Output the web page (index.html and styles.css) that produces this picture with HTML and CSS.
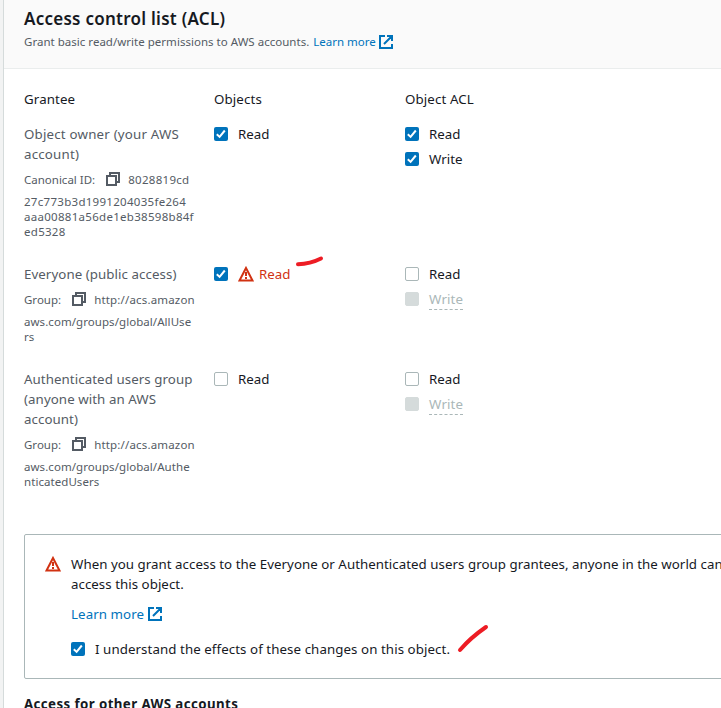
FILE: index.html
```
<!DOCTYPE html>
<html lang="en">
<head>
<meta charset="utf-8">
<title>Access control list (ACL)</title>
<link rel="stylesheet" href="styles.css">
</head>
<body>
<svg class="defs" width="0" height="0" aria-hidden="true">
  <symbol id="external" viewBox="0 0 14 14"><path d="M6 1H1v12h12V9M8 1h5v5M12.5 1.5 5 9" fill="none" stroke="currentColor" stroke-width="2"/></symbol>
  <symbol id="copy" viewBox="0 0 14 14"><path d="M1 4h9v9H1zM4 4V1h9v9h-3" fill="none" stroke="currentColor" stroke-width="2"/></symbol>
  <symbol id="warning" viewBox="0 0 16 16"><path d="M8 2 1.5 14.5h13z" fill="none" stroke="currentColor" stroke-width="2"/><path d="M8 6v4M8 11v2" fill="none" stroke="currentColor" stroke-width="2"/></symbol>
  <symbol id="check" viewBox="0 0 14 14"><path d="m2.8 7.3 2.8 2.6 5.2-6.4" fill="none" stroke="#fff" stroke-width="2"/></symbol>
</svg>
<main class="panel">
  <header class="panel-header">
    <h1>Access control list (ACL)</h1>
    <p class="description"><span class="summary">Grant basic read/write permissions to AWS accounts.</span> <a class="link">Learn more<svg class="icon"><use href="#external"/></svg></a></p>
  </header>
  <section class="grants">
    <div class="row head"><div>Grantee</div><div>Objects</div><div>Object ACL</div></div>
    <div class="row owner">
      <div class="grantee">
        <div class="name">Object owner (your AWS<br>account)</div>
        <div class="ident"><span class="key">Canonical ID:</span><svg class="icon"><use href="#copy"/></svg><span class="hex">8028819cd</span></div>
        <div class="rest hex">27c773b3d1991204035fe264<br>aaa00881a56de1eb38598b84f<br>ed5328</div>
      </div>
      <div class="options"><div class="option"><span class="box on"><svg><use href="#check"/></svg></span><span>Read</span></div></div>
      <div class="options"><div class="option"><span class="box on"><svg><use href="#check"/></svg></span><span>Read</span></div><div class="option"><span class="box on"><svg><use href="#check"/></svg></span><span>Write</span></div></div>
    </div>
    <div class="row everyone">
      <div class="grantee">
        <div class="name">Everyone (public access)</div>
        <div class="ident"><span class="key">Group:</span><svg class="icon"><use href="#copy"/></svg><span class="url">http://acs.amazon</span></div>
        <div class="rest">aws.com/groups/global/AllUse<br>rs</div>
      </div>
      <div class="options"><div class="option danger"><span class="box on"><svg><use href="#check"/></svg></span><svg class="warn"><use href="#warning"/></svg><span>Read</span>
        <svg class="stroke short" viewBox="0 0 30 12"><path d="M3 9.2C11 9 19 7 26 3.5" /></svg></div></div>
      <div class="options"><div class="option"><span class="box"></span><span>Read</span></div><div class="option disabled"><span class="box"></span><span>Write</span></div></div>
    </div>
    <div class="row authenticated">
      <div class="grantee">
        <div class="name">Authenticated users group<br>(anyone with an AWS<br>account)</div>
        <div class="ident"><span class="key">Group:</span><svg class="icon"><use href="#copy"/></svg><span class="url">http://acs.amazon</span></div>
        <div class="rest">aws.com/groups/global/Authe<br>nticatedUsers</div>
      </div>
      <div class="options"><div class="option"><span class="box"></span><span>Read</span></div></div>
      <div class="options"><div class="option"><span class="box"></span><span>Read</span></div><div class="option disabled"><span class="box"></span><span>Write</span></div></div>
    </div>
  </section>
  <section class="alert">
    <svg class="warn"><use href="#warning"/></svg>
    <div class="alert-body">
      <p class="message">When you grant access to the Everyone or Authenticated users group grantees, anyone in the world can<br>access this object.</p>
      <p class="more"><a class="link">Learn more<svg class="icon"><use href="#external"/></svg></a></p>
      <div class="option confirm"><span class="box on"><svg><use href="#check"/></svg></span><span>I understand the effects of these changes on this object.</span>
        <svg class="stroke long" viewBox="0 0 32 30"><path d="M3 26C9 19 16 12 29 3" /></svg></div>
    </div>
  </section>
  <h2>Access for other AWS accounts</h2>
</main>
</body>
</html>
```
FILE: styles.css
```
* { box-sizing: border-box; }
body { margin: 0; height: 708px; overflow: hidden; background: #f2f3f3; color: #16191f; font: 13.3px/20px "Noto Sans", sans-serif; }
h1, h2, p { margin: 0; }
.defs { display: block; width: 0; height: 0; }
.panel { height: 708px; margin-left: 3px; border-left: 1px solid #d5dbdb; background: #fff; overflow: hidden; white-space: nowrap; }
.panel-header { height: 69px; padding: 8px 20px 0; background: #fafafa; border-bottom: 1px solid #eaeded; }
h1 { font-size: 17px; line-height: 22px; font-weight: 600; letter-spacing: .26px; }
.description { display: flex; gap: 4px; margin-top: 2px; font-size: 11.5px; color: #545b64; }
.summary { letter-spacing: .02px; }
.link { display: flex; align-items: center; color: #0073bb; }
.icon { width: 14px; height: 14px; flex: none; }
.link .icon { margin-left: 4px; }
.description .icon { margin-left: 3px; }
.grants { padding: 20px 20px 0; }
.row { display: grid; grid-template-columns: 190px 191px 1fr; }
.head { height: 35px; letter-spacing: .12px; }
.owner { height: 140px; }
.everyone { height: 105px; }
.authenticated { height: 165px; }
.grantee { color: #545b64; }
.name { letter-spacing: .07px; }
.owner .name { letter-spacing: .2px; }
.ident { display: flex; align-items: center; margin-top: 6px; font-size: 11.5px; }
.ident .icon { margin: -2px 8px 0 11px; }
.rest { margin-top: 4px; font-size: 11.5px; line-height: 15px; letter-spacing: .06px; }
.hex { letter-spacing: .29px; }
.url { letter-spacing: .17px; }
.option { position: relative; display: flex; align-items: center; width: max-content; height: 20px; margin-bottom: 5px; }
.box { width: 14px; height: 14px; margin-right: 10px; border: 1px solid #aab7b8; border-radius: 2px; background: #fff; }
.box.on { border: 0; background: #0073bb; }
.box svg { display: block; width: 14px; height: 14px; }
.warn { width: 16px; height: 16px; flex: none; color: #d13212; }
.danger { color: #d13212; }
.danger .warn { margin-right: 5px; }
.disabled { color: #aab7b8; }
.disabled .box { border-color: #d5dbdb; background: #d5dbdb; }
.disabled span:last-child { height: 21px; margin-top: 1px; border-bottom: 1px dashed #aab7b8; letter-spacing: .15px; }
.stroke { position: absolute; fill: none; stroke: #ed1c24; stroke-width: 4; stroke-linecap: round; }
.short { left: 81px; top: -9px; width: 30px; height: 12px; }
.long { left: 386px; top: -15px; width: 32px; height: 30px; }
.alert { display: flex; width: 760px; height: 145px; margin-left: 20px; padding: 19px 20px 20px; border: 1px solid #aab7b8; border-radius: 2px; }
.alert > .warn { margin: 2px 10px 0 0; }
.message { letter-spacing: .035px; }
.more { margin: 10px 0 15px; }
.more .link { letter-spacing: .08px; }
.confirm { letter-spacing: .075px; }
h2 { margin: 15px 0 0 20px; font-size: 13.3px; line-height: 20px; font-weight: 700; letter-spacing: .4px; }
```
